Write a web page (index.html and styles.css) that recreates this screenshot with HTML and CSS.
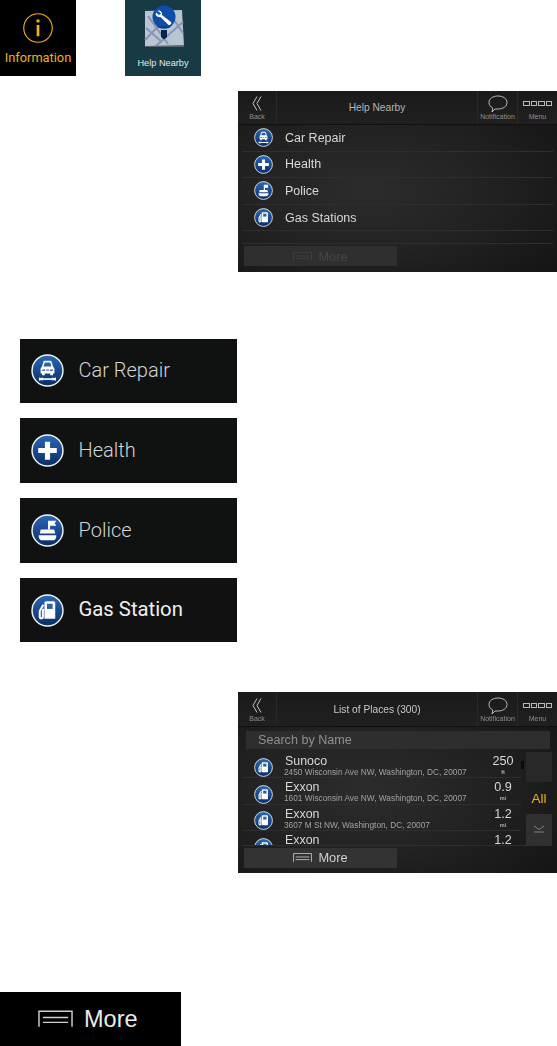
FILE: index.html
```html
<!DOCTYPE html>
<html lang="en">
<head>
    <meta charset="UTF-8">
    <meta name="viewport" content="width=device-width, initial-scale=1.0">
    <title>Help Nearby</title>
    <link rel="stylesheet" href="styles.css">
</head>
<body>

<svg class="sprite" aria-hidden="true">
    <defs>
        <linearGradient id="disc" x1="0" y1="0" x2="0" y2="1">
            <stop offset="0" stop-color="#2a68b4"/>
            <stop offset="1" stop-color="#0a2c6a"/>
        </linearGradient>
    </defs>
    <symbol id="i-car" viewBox="0 0 32 32">
        <circle cx="16" cy="16" r="15" fill="url(#disc)" stroke="#f2f5f8" stroke-width="1.4"/>
        <path d="M10.500 12.500l1.600-5.200q.3-.8 1.200-.8h5.400q.9 0 1.200.8l1.600 5.200q1.200.5 1.200 1.800v4.700h-1.400v1.500h-2.600V19h-5.400v1.500h-2.600V19H9.300v-4.700q0-1.300 1.200-1.800z" fill="#fff"/>
        <path d="M13.300 8.200h5.400l1.100 3.800h-7.600z" fill="#2a62a8"/>
        <path d="M11 15h2.500v1.500H11zM18.500 15H21v1.500h-2.500zM14.500 15h3v1h-3z" fill="#2a62a8"/>
        <path d="M11 23.500h10v1.600H11z" fill="#fff"/>
        <path d="M8.200 22.500l1.500 1 1.300-.9 .6 1.700-.6 1.700-1.300-.9-1.500 1q-1.200-1.800 0-3.600zM23.800 22.500l-1.500 1-1.300-.9-.6 1.700 .6 1.700 1.300-.9 1.500 1q1.200-1.800 0-3.600z" fill="#fff"/>
    </symbol>
    <symbol id="i-plus" viewBox="0 0 32 32">
        <circle cx="16" cy="16" r="15" fill="url(#disc)" stroke="#f2f5f8" stroke-width="1.4"/>
        <path d="M13.500 7.500h5v6h6.500v5h-6.500v6.500h-5V18.500H7v-5h6.500z" fill="#fff"/>
    </symbol>
    <symbol id="i-police" viewBox="0 0 32 32">
        <circle cx="16" cy="16" r="15" fill="url(#disc)" stroke="#f2f5f8" stroke-width="1.4"/>
        <path d="M16.500 6.500h8l-1.500 2.500 1.500 2.500h-6v3.500h-2z" fill="#fff"/>
        <path d="M9.500 15h13l1 4H8.500z" fill="#fff"/>
        <path d="M7.500 20.500h17v1.500q-.5 3.500-3.500 3.500H11q-3 0-3.500-3.500z" fill="#fff"/>
    </symbol>
    <symbol id="i-gas" viewBox="0 0 32 32">
        <circle cx="16" cy="16" r="15" fill="url(#disc)" stroke="#f2f5f8" stroke-width="1.4"/>
        <path d="M14.500 7h7.500q1.500 0 1.500 1.500V24H13V8.500q0-1.500 1.500-1.500z" fill="#fff"/>
        <path d="M15.500 9.500h5.500v5h-5.500z" fill="#2a62a8"/>
        <path d="M12 10.500l-3.500 6v5.500q0 1.500 1.500 1.500t1.500-1.500v-6l1-1.500" fill="none" stroke="#fff" stroke-width="2"/>
    </symbol>
    <symbol id="i-more" viewBox="0 0 36 17">
        <path d="M1 17V1h34v16" fill="none" stroke="currentColor" stroke-width="1.500"/>
        <path d="M5 7.500h26M5 12.500h26" stroke="currentColor" stroke-width="1.500"/>
    </symbol>
    <symbol id="i-back" viewBox="0 0 10 15">
        <path d="M5 .5L1 7.500l4 7M9 .5L5 7.500l4 7" fill="none" stroke="#c4c4c4" stroke-width="1"/>
    </symbol>
    <symbol id="i-note" viewBox="0 0 20 18">
        <path d="M10 1c5 0 9 2.500 9 6.500S15 14 10 14H7l-3 3 .8-4C2.500 12 1 10 1 7.500 1 3.500 5 1 10 1z" fill="none" stroke="#c9c9c9" stroke-width=".9"/>
    </symbol>
</svg>

<div class="tiles">
    <div class="tile tile-info">
        <svg class="info-icon" viewBox="0 0 40 40">
            <circle cx="20" cy="20" r="19" fill="none" stroke="#f2b310" stroke-width="1.500"/>
            <circle cx="20" cy="10.500" r="2.300" fill="#f2b310"/>
            <rect x="18.200" y="16" width="3.600" height="15" fill="#f2b310"/>
        </svg>
        <span>Information</span>
    </div>
    <div class="tile tile-help">
        <svg class="help-icon" viewBox="0 0 42 44">
            <path d="M3 7L40 6l2 36-39 1z" fill="#bac5d4"/>
            <path d="M4 24L20 38M3 36L26 12M14 42L41 18M26 7l15 22M6 12l20 28" stroke="#8b93b5" stroke-width="2" fill="none"/>
            <path d="M3 42l39-1v2H3z" fill="#55686c"/>
            <path d="M19 26h6v7l-3 2.500-3-2.500z" fill="#06254f"/>
            <circle cx="22" cy="13" r="11.500" fill="#0d4fa8"/>
            <path d="M22 24.500c-4 0-6-1-7-2h14c-1 1-3 2-7 2z" fill="#0a3a80"/>
            <path d="M14.500 7.500q3-2 5 .5 1 1.500 .5 3l9 7q1 1.500-.5 2.500-1.500 1-2.500 0l-7.500-7.500q-2.500 .5-4-1T14 8.500l3 2.500 2-1.500-3-2.500z" fill="#fff"/>
        </svg>
        <span>Help Nearby</span>
    </div>
</div>

<section class="screen screen-help">
    <header class="screen-bar">
        <div class="bar-btn bar-back"><svg class="back-icon"><use href="#i-back"/></svg><small>Back</small></div>
        <div class="bar-title">Help Nearby</div>
        <div class="bar-btn bar-note"><svg class="note-icon"><use href="#i-note"/></svg><small>Notification</small></div>
        <div class="bar-btn bar-menu"><span class="dots"><i></i><i></i><i></i><i></i></span><small>Menu</small></div>
    </header>
    <ul class="help-list">
        <li><svg class="disc"><use href="#i-car"/></svg>Car Repair</li>
        <li><svg class="disc"><use href="#i-plus"/></svg>Health</li>
        <li><svg class="disc"><use href="#i-police"/></svg>Police</li>
        <li><svg class="disc"><use href="#i-gas"/></svg>Gas Stations</li>
    </ul>
    <div class="screen-foot foot-help">
        <div class="more-btn more-off"><svg class="more-icon"><use href="#i-more"/></svg>More</div>
    </div>
</section>

<div class="cards">
    <div class="card"><svg class="card-disc"><use href="#i-car"/></svg><span>Car Repair</span></div>
    <div class="card"><svg class="card-disc"><use href="#i-plus"/></svg><span>Health</span></div>
    <div class="card"><svg class="card-disc"><use href="#i-police"/></svg><span>Police</span></div>
    <div class="card card-gas"><svg class="card-disc"><use href="#i-gas"/></svg><span>Gas Station</span></div>
</div>

<section class="screen screen-places">
    <header class="screen-bar">
        <div class="bar-btn bar-back"><svg class="back-icon"><use href="#i-back"/></svg><small>Back</small></div>
        <div class="bar-title">List of Places (300)</div>
        <div class="bar-btn bar-note"><svg class="note-icon"><use href="#i-note"/></svg><small>Notification</small></div>
        <div class="bar-btn bar-menu"><span class="dots"><i></i><i></i><i></i><i></i></span><small>Menu</small></div>
    </header>
    <div class="search">Search by Name</div>
    <div class="places">
        <ul class="place-list">
            <li>
                <svg class="disc"><use href="#i-gas"/></svg>
                <div class="place-text"><b>Sunoco</b><small>2450 Wisconsin Ave NW, Washington, DC, 20007</small></div>
                <div class="place-dist"><b>250</b><small>ft</small></div>
            </li>
            <li>
                <svg class="disc"><use href="#i-gas"/></svg>
                <div class="place-text"><b>Exxon</b><small>1601 Wisconsin Ave NW, Washington, DC, 20007</small></div>
                <div class="place-dist"><b>0.9</b><small>mi</small></div>
            </li>
            <li>
                <svg class="disc"><use href="#i-gas"/></svg>
                <div class="place-text"><b>Exxon</b><small>3607 M St NW, Washington, DC, 20007</small></div>
                <div class="place-dist"><b>1.2</b><small>mi</small></div>
            </li>
            <li>
                <svg class="disc"><use href="#i-gas"/></svg>
                <div class="place-text"><b>Exxon</b></div>
                <div class="place-dist"><b>1.2</b></div>
            </li>
        </ul>
        <div class="scroll-track"><span class="scroll-thumb"></span></div>
        <div class="side">
            <div class="side-btn"></div>
            <div class="side-btn side-all">All</div>
            <div class="side-btn side-down">
                <svg viewBox="0 0 12 8" class="down-icon"><path d="M1 1l5 3.500L11 1M1 7h10" fill="none" stroke="#8a8a8a" stroke-width=".9"/></svg>
            </div>
        </div>
    </div>
    <div class="screen-foot">
        <div class="more-btn"><svg class="more-icon"><use href="#i-more"/></svg>More</div>
    </div>
</section>

<div class="more-big"><svg class="more-big-icon"><use href="#i-more"/></svg><span>More</span></div>

</body>
</html>
```

FILE: styles.css
```css
html, body {
    margin: 0;
    padding: 0;
    background-color: #fff;
}
body {
    width: 557px;
    height: 1046px;
    overflow: hidden;
    font-family: "Liberation Sans", Arial, sans-serif;
}
ul {
    list-style: none;
    margin: 0;
    padding: 0;
}
.sprite {
    width: 0;
    height: 0;
    display: block;
}

/* top tiles */
.tiles {
    display: flex;
    gap: 49px;
    height: 76px;
}
.tile {
    width: 76px;
    height: 76px;
    display: flex;
    flex-direction: column;
    align-items: center;
    box-sizing: border-box;
}
.tile-info {
    background-color: #000;
    color: #eeb116;
    font-family: Roboto, sans-serif;
    font-size: 12.800px;
    padding-top: 13px;
    gap: 7px;
}
.info-icon {
    width: 30px;
    height: 30px;
    flex: none;
}
.tile-help {
    background-color: #173a45;
    color: #e4e9ea;
    font-size: 9.200px;
    padding-top: 4px;
    gap: 10px;
}
.help-icon {
    width: 42px;
    height: 44px;
    flex: none;
}

/* device screens */
.screen {
    width: 319px;
    margin-left: 238px;
    color: #d6d6d6;
    background: radial-gradient(ellipse at 40% 55%, #2c2c2c 0%, #222 45%, #121212 100%);
    filter: blur(.4px);
}
.screen-help {
    height: 181px;
    margin-top: 15px;
}
.screen-places {
    height: 181px;
    margin-top: 49.400px;
}
.screen-bar {
    display: flex;
    height: 34px;
    box-sizing: border-box;
    background: linear-gradient(#1a1a1a, #202020);
    border-bottom: 1px solid #101010;
}
.screen-places .screen-bar {
    height: 35px;
}
.bar-btn {
    display: flex;
    flex-direction: column;
    align-items: center;
    justify-content: flex-end;
    padding-bottom: 3px;
    box-sizing: border-box;
    flex: none;
}
.bar-btn small {
    font-size: 7px;
    line-height: 8px;
    color: #8f8f8f;
}
.bar-back {
    width: 39px;
    border-right: 1px solid #282828;
}
.back-icon {
    width: 10px;
    height: 15px;
    margin-bottom: 2px;
}
.bar-title {
    flex: 1;
    text-align: center;
    font-size: 10.200px;
    line-height: 34px;
    color: #b5b5b5;
}
.screen-places .bar-title {
    line-height: 36px;
    color: #c8c8c8;
}
.bar-note {
    width: 41px;
    border-left: 1px solid #282828;
    border-right: 1px solid #282828;
}
.note-icon {
    width: 20px;
    height: 18px;
}
.bar-menu {
    width: 39px;
}
.dots {
    display: flex;
    gap: 1px;
    margin-bottom: 7px;
}
.dots i {
    width: 4.500px;
    height: 3px;
    border: 1px solid #b8b8b8;
}

/* help list */
.disc {
    width: 19px;
    height: 19px;
    flex: none;
}
.help-list {
    height: 118px;
    padding: 0 4px;
}
.help-list li {
    height: 25.600px;
    border-bottom: 1px solid #2e2e2e;
    display: flex;
    align-items: center;
    padding-left: 12px;
    gap: 12px;
    font-size: 12.500px;
    color: #d8d8d8;
}
.screen-foot {
    padding: 2px 0 0 6px;
}
.foot-help {
    border-top: 1px solid #2e2e2e;
    margin: 0 4px;
    padding-left: 2px;
}
.more-btn {
    width: 153px;
    height: 20px;
    background-color: #333;
    border-radius: 1px;
    display: flex;
    align-items: center;
    justify-content: center;
    gap: 6px;
    font-size: 12.800px;
    color: #cfcfcf;
}
.more-off {
    color: #454545;
    background-color: #2f2f2f;
}
.more-icon {
    width: 19px;
    height: 9px;
}

/* cards */
.cards {
    display: flex;
    flex-direction: column;
    gap: 15.200px;
    margin: 66.700px 0 0 20px;
}
.card {
    width: 217px;
    height: 64.500px;
    background-color: #101212;
    display: flex;
    align-items: center;
    gap: 15px;
    padding-left: 10.500px;
    box-sizing: border-box;
    font-family: Roboto, sans-serif;
    font-weight: 300;
    font-size: 20px;
    color: #d4d4d4;
}
.card span {
    margin-bottom: 1px;
}
.card-gas {
    font-weight: 400;
    font-size: 20.300px;
    color: #f0f0f0;
    background-color: #111;
}
.card-gas span {
    margin-bottom: 3px;
}
.card-disc {
    width: 33px;
    height: 33px;
    flex: none;
}

/* places */
.search {
    height: 18px;
    margin: 4px 7px 3px 8px;
    padding-left: 12px;
    background-color: #2e2e2e;
    color: #8f8f8f;
    font-size: 12.600px;
    line-height: 18px;
}
.places {
    display: flex;
    height: 93px;
    border-bottom: 1px solid #2e2e2e;
    margin: 0 5px 0 4px;
}
.place-list {
    width: 279px;
    overflow: hidden;
}
.place-list li {
    height: 22.600px;
    padding: 3px 0 0 12px;
    border-bottom: 1px solid #2e2e2e;
    display: flex;
    align-items: flex-start;
    gap: 12px;
}
.place-list .disc {
    margin-top: 3.500px;
}
.place-text {
    flex: 1;
    display: flex;
    flex-direction: column;
}
.place-text b {
    font-weight: normal;
    font-size: 12.400px;
    line-height: 13px;
    color: #d8d8d8;
}
.place-text small {
    font-size: 8.300px;
    line-height: 9px;
    margin-left: -1px;
    color: #a2a2a2;
    white-space: nowrap;
}
.place-dist {
    width: 32px;
    text-align: center;
    display: flex;
    flex-direction: column;
    margin-right: 2px;
}
.place-dist b {
    font-weight: normal;
    font-size: 12.600px;
    line-height: 13px;
    color: #d8d8d8;
}
.place-dist small {
    font-size: 5.500px;
    font-weight: bold;
    line-height: 9px;
    color: #b0b0b0;
}
.scroll-track {
    width: 4px;
    flex: none;
}
.scroll-thumb {
    display: block;
    width: 3px;
    height: 8px;
    margin-top: 9px;
    background-color: #0b0b0b;
}
.side {
    width: 26px;
    margin-left: 1px;
    display: flex;
    flex-direction: column;
    gap: 1px;
}
.side-btn {
    flex: 1;
    background-color: #282828;
    display: flex;
    align-items: center;
    justify-content: center;
    font-size: 13.500px;
}
.side-all {
    background: none;
    color: #e8b020;
}
.side-down {
    background-color: #303030;
}
.down-icon {
    width: 12px;
    height: 8px;
}

/* big more button */
.more-big {
    width: 181px;
    height: 54px;
    margin-top: 119px;
    padding-left: 38px;
    box-sizing: border-box;
    background-color: #000;
    color: #ececec;
    display: flex;
    align-items: center;
    gap: 11px;
    font-size: 23.500px;
}
.more-big span {
    margin-top: 2px;
}
.more-big-icon {
    width: 35px;
    height: 17px;
    color: #cfcfcf;
}
```
